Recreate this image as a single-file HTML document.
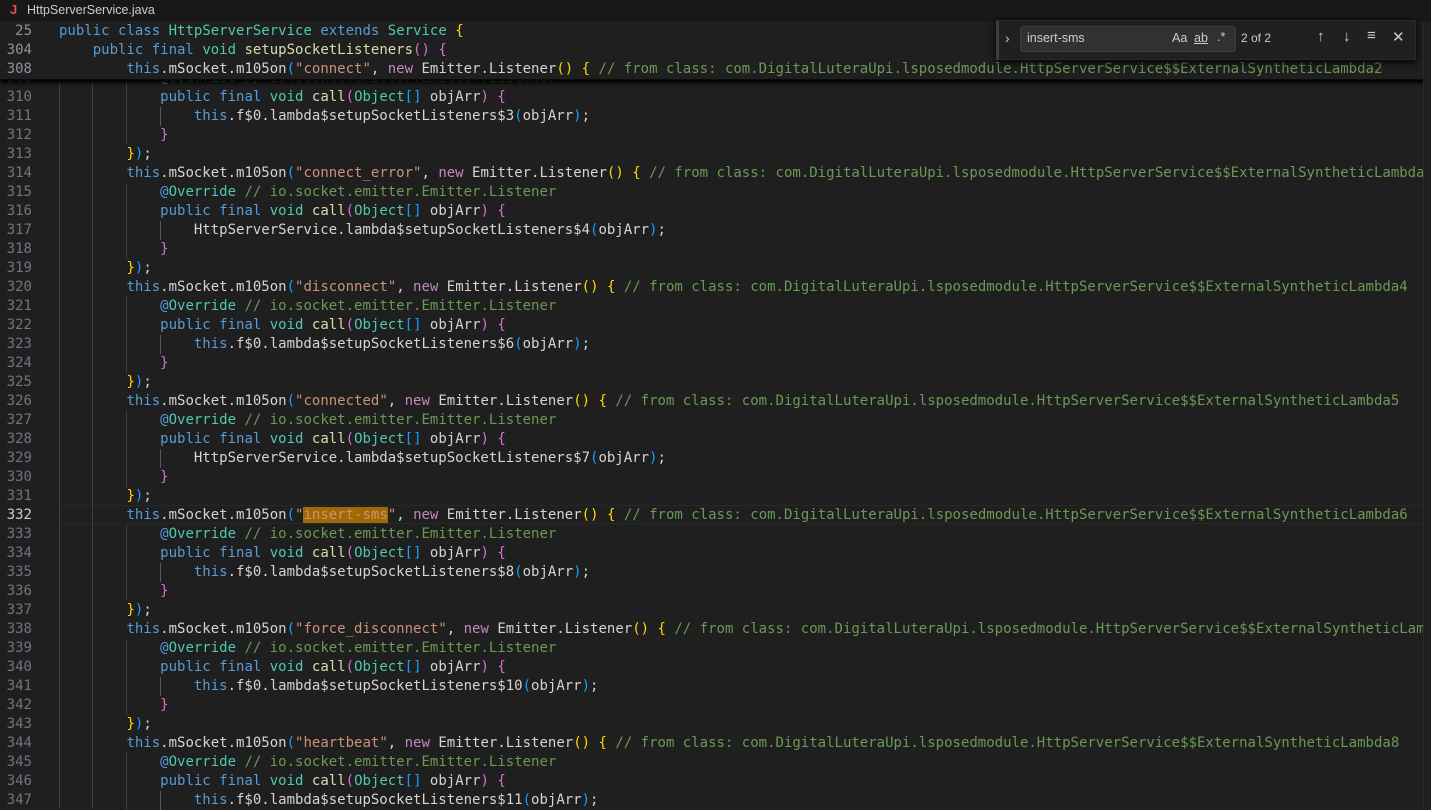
<!DOCTYPE html>
<html><head><meta charset="utf-8"><style>
body{margin:0;width:1431px;height:808px;background:#1f1f1f;overflow:hidden;position:relative;font-family:"DejaVu Sans Mono","Liberation Mono",monospace;font-size:14px;}
.tab{position:absolute;left:0;top:0;width:1431px;height:21px;background:#181818;font-family:"Liberation Sans",sans-serif;font-size:12.5px;color:#cccccc;}
.tab .j{position:absolute;left:10px;top:2px;color:#f14c4c;font-weight:bold;font-size:13px}
.tab .nm{position:absolute;left:27px;top:3px;color:#cccccc}
.ln{position:absolute;left:0;width:32px;text-align:right;color:#6e7681;line-height:19px;white-space:pre}
.cd{position:absolute;left:59px;line-height:19px;white-space:pre;color:#d4d4d4}
.k{color:#569cd6}.t{color:#4ec9b0}.f{color:#dcdcaa}.s{color:#ce9178}.c{color:#6a9955}.n{color:#c586c0}
.g{color:#ffd700}.p{color:#da70d6}.b{color:#179fff}
.guide{position:absolute;width:1px;background:#404040}
.sticky{position:absolute;left:0;top:21px;width:1431px;height:58px;background:#1f1f1f;box-shadow:0 3px 4px #000;border-bottom:1px solid #0b0b0b}
.find{position:absolute;left:996px;top:20px;width:416px;height:38px;background:#202020;border:1px solid #2b2b2b;border-left:3px solid #3c3c3c;box-shadow:0 2px 8px #000;font-family:"Liberation Sans",sans-serif;color:#cccccc;font-size:12.5px}
.inp{position:absolute;left:21px;top:5px;width:214px;height:24px;background:#313131;border:1px solid #3c3c3c;border-radius:3px}
.hl{background:#9e6a03}
.cur{position:absolute;left:59px;top:505px;width:1365px;height:17px;border:1px solid #282828}
</style></head><body>
<div class="tab"><span class="j">J</span><span class="nm">HttpServerService.java</span></div>
<div class="cur"></div>
<div id="code"></div>
<div class="sticky">
<div class="ln" style="top:1px;color:#8b949e">25</div>
<div class="cd" style="top:1px"><span class="k">public class</span> <span class="t">HttpServerService</span> <span class="k">extends</span> <span class="t">Service</span> <span class="g">{</span></div>
<div class="ln" style="top:20px;color:#8b949e">304</div>
<div class="cd" style="top:20px">    <span class="k">public final</span> <span class="t">void</span> <span class="f">setupSocketListeners</span><span class="p">()</span> <span class="p">{</span></div>
<div class="ln" style="top:39px;color:#8b949e">308</div>
<div class="cd" style="top:39px">        <span class="k">this</span>.mSocket.m105on<span class="b">(</span><span class="s">"connect"</span>, <span class="n">new</span> Emitter.Listener<span class="g">()</span> <span class="g">{</span> <span class="c">// from class: com.DigitalLuteraUpi.lsposedmodule.HttpServerService$$ExternalSyntheticLambda2</span></div>
</div>
<div class="find">
<span style="position:absolute;left:6px;top:9px;font-size:14px">&#8250;</span>
<div class="inp"><span style="position:absolute;left:6px;top:4px">insert-sms</span>
<span style="position:absolute;left:151px;top:4px">Aa</span>
<span style="position:absolute;left:173px;top:4px;text-decoration:underline">ab</span>
<span style="position:absolute;left:196px;top:3px">.*</span></div>
<span style="position:absolute;left:242px;top:10px;font-size:12px">2 of 2</span>
<span style="position:absolute;left:318px;top:7px;font-size:15px">&#8593;</span>
<span style="position:absolute;left:344px;top:7px;font-size:15px">&#8595;</span>
<span style="position:absolute;left:368px;top:6px;font-size:15px">&#8801;</span>
<span style="position:absolute;left:393px;top:7px;font-size:15px">&#10005;</span>
</div>
<div style="position:absolute;right:0;top:21px;width:7px;height:787px;background:#1f1f1f;border-left:1px solid #2a2a2a"></div>
<script>
var L=[];
var B='            <span class="k">@</span><span class="t">Override</span> <span class="c">// io.socket.emitter.Emitter.Listener</span>';
var C='            <span class="k">public final</span> <span class="t">void</span> <span class="f">call</span><span class="p">(</span><span class="t">Object</span><span class="b">[]</span> objArr<span class="p">)</span> <span class="p">{</span>';
var E='            <span class="p">}</span>';
var F='        <span class="g">}</span><span class="b">)</span>;';
function A(s,l){return '        <span class="k">this</span>.mSocket.m105on<span class="b">(</span><span class="s">"'+s+'"</span>, <span class="n">new</span> Emitter.Listener<span class="g">()</span> <span class="g">{</span> <span class="c">// from class: com.DigitalLuteraUpi.lsposedmodule.HttpServerService$$ExternalSyntheticLambda'+l+'</span>';}
function D(h,n){return '                '+(h?'HttpServerService':'<span class="k">this</span>.f$0')+'.lambda$setupSocketListeners$'+n+'<span class="b">(</span>objArr<span class="b">)</span>;';}
L.push([309,B],[310,C],[311,D(0,3)],[312,E],[313,F]);
var blocks=[["connect_error","3",1,4],["disconnect","4",0,6],["connected","5",1,7],["insert-sms","6",0,8],["force_disconnect","7",0,10]];
var n=314;
blocks.forEach(function(b){L.push([n++,A(b[0],b[1])],[n++,B],[n++,C],[n++,D(b[2],b[3])],[n++,E],[n++,F]);});
L.push([344,A("heartbeat","8")],[345,B],[346,C],[347,D(0,11)]);
var h='';
L.forEach(function(x){var top=87.5+(x[0]-310)*19;var t=x[1];
if(x[0]==332)t=t.replace('"insert-sms"','"<span class="hl">insert-sms</span>"');
h+='<div class="ln" style="top:'+top+'px'+(x[0]==332?';color:#cccccc':'')+'">'+x[0]+'</div><div class="cd" style="top:'+top+'px">'+t+'</div>';});
h+='<div class="guide" style="left:59px;top:79px;height:729px"></div>';
h+='<div class="guide" style="left:92px;top:79px;height:729px"></div>';
L.forEach(function(x){var top=87.5+(x[0]-310)*19;var t=x[1];
var ind=t.match(/^ */)[0].length;for(var i=8;i<ind;i+=4){h+='<div class="guide" style="left:'+(59+i*8.43)+'px;top:'+top+'px;height:19px'+(i==12?';background:#585858':'')+'"></div>';}});
document.getElementById('code').innerHTML=h;
</script>
</body></html>
